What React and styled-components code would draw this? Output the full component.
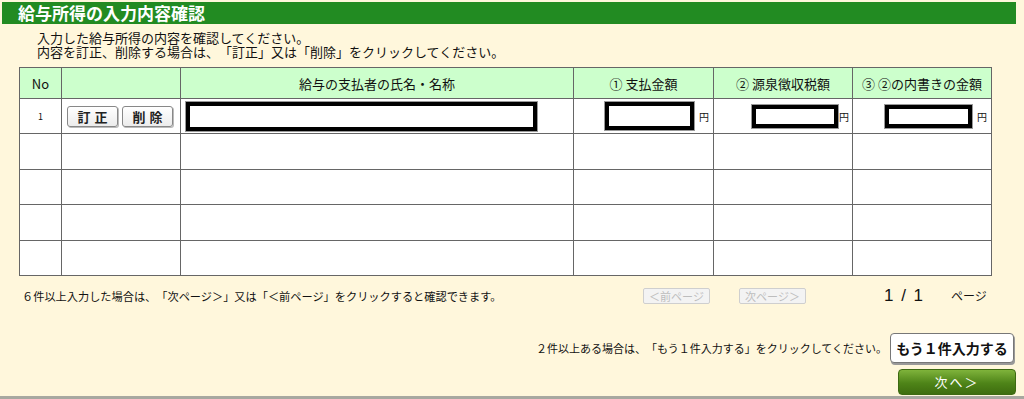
import React from "react";
import styled, { createGlobalStyle } from "styled-components";

const Global = createGlobalStyle`
  html, body { margin: 0; padding: 0; background: #fff7dc; }
  body {
    font-family: "Noto Sans CJK JP", "Noto Sans", sans-serif;
    color: #111;
    text-spacing-trim: space-all;
  }
`;

const Page = styled.div`
  width: 1024px;
  height: 399px;
  box-sizing: border-box;
  background: #fff7dc;
  padding-top: 2px;
  border-bottom: 3px solid #a8a8a0;
  display: flex;
  flex-direction: column;
`;

const TitleBar = styled.h1`
  margin: 0 8px 0 2px;
  height: 22px;
  background: #228b22;
  color: #fff;
  font-size: 17px;
  font-weight: bold;
  line-height: 22px;
  padding-left: 16px;
`;

const Intro = styled.div`
  margin: 7px 0 0 37px;
  font-size: 13px;
  line-height: 14px;
`;

const IntroLine = styled.div`
  height: 14px;
  line-height: 14px;
`;

const Table = styled.table`
  margin: 8px 0 0 19px;
  width: 972px;
  border-collapse: collapse;
  table-layout: fixed;
  background: #fff;
`;

const Th = styled.th`
  background: #ccffcc;
  border: 1px solid #666;
  height: 30px;
  padding: 0;
  font-weight: normal;
  font-size: 13px;
  text-align: center;
`;

const Td = styled.td`
  border: 1px solid #666;
  height: 34.4px;
  padding: 0 ${(p) => p.$pr || 0}px 0 ${(p) => p.$pl || 0}px;
  text-align: ${(p) => p.$align || "left"};
  font-size: ${(p) => p.$fs || 13}px;
  vertical-align: middle;
`;

const EditButton = styled.button`
  width: 51px;
  height: 21px;
  margin-right: 4px;
  padding: 0;
  font-family: inherit;
  font-size: 13px;
  font-weight: bold;
  letter-spacing: 4px;
  text-indent: 4px;
  border: 1px solid #888;
  border-radius: 3px;
  background: linear-gradient(#fff, #ececec);
  box-shadow: 1px 1px 0 #bbb;
  color: #222;
  vertical-align: middle;
`;

const Box = styled.span`
  display: inline-block;
  box-sizing: border-box;
  width: ${(p) => p.$w}px;
  height: ${(p) => p.$h}px;
  border: 4px solid #000;
  outline: 1px solid #999;
  background: #fff;
  vertical-align: middle;
`;

const Yen = styled.span`
  display: inline-block;
  font-size: 10px;
  margin-left: ${(p) => p.$gap}px;
  vertical-align: middle;
`;

const Pager = styled.div`
  display: flex;
  align-items: center;
  margin: 10px 0 0 0;
  height: 20px;
`;

const Note = styled.div`
  font-size: ${(p) => p.$fs}px;
  margin-left: ${(p) => p.$ml || 0}px;
  width: ${(p) => (p.$w ? `${p.$w}px` : "auto")};
  white-space: nowrap;
`;

const PageBtn = styled.button`
  width: 67px;
  height: 16px;
  padding: 0;
  font-family: inherit;
  font-size: 11px;
  line-height: 14px;
  color: #bdbdbd;
  background: #f3f3f3;
  border: 1px solid #cfcfcf;
  border-radius: 2px;
  margin-left: ${(p) => p.$ml}px;
`;

const PageCount = styled.span`
  font-family: "Liberation Sans", Arial, sans-serif;
  font-size: 17px;
  margin-left: 78px;
  word-spacing: 3px;
`;

const PageWord = styled.span`
  font-size: 12px;
  margin-left: 28px;
`;

const AddRow = styled.div`
  display: flex;
  align-items: center;
  justify-content: flex-end;
  margin: 27px 10px 0 0;
`;

const AddBtn = styled.button`
  width: 124px;
  height: 30px;
  margin-left: 3px;
  padding: 0;
  font-family: inherit;
  font-size: 14px;
  font-weight: bold;
  color: #111;
  background: #fff;
  border: 1px solid #777;
  border-radius: 4px;
  box-shadow: 1px 2px 0 #999;
`;

const NextRow = styled.div`
  display: flex;
  justify-content: flex-end;
  margin: 6px 8px 0 0;
`;

const NextBtn = styled.button`
  width: 118px;
  height: 26px;
  padding: 0;
  font-family: inherit;
  font-size: 13px;
  color: #fff;
  letter-spacing: 2px;
  background: linear-gradient(#7fb33b, #4e8418 55%, #3e6d0f);
  border: 1px solid #3d6a12;
  border-radius: 4px;
`;

const rows = [1, 2, 3, 4, 5];

export default function App() {
  return (
    <>
      <Global />
      <Page>
        <TitleBar>給与所得の入力内容確認</TitleBar>
        <Intro>
          <IntroLine>入力した給与所得の内容を確認してください。</IntroLine>
          <IntroLine>内容を訂正、削除する場合は、「訂正」又は「削除」をクリックしてください。</IntroLine>
        </Intro>
        <Table>
          <colgroup>
            <col style={{ width: 42 }} />
            <col style={{ width: 119 }} />
            <col style={{ width: 393 }} />
            <col style={{ width: 140 }} />
            <col style={{ width: 139 }} />
            <col style={{ width: 139 }} />
          </colgroup>
          <thead>
            <tr>
              <Th>No</Th>
              <Th></Th>
              <Th>給与の支払者の氏名・名称</Th>
              <Th>① 支払金額</Th>
              <Th>② 源泉徴収税額</Th>
              <Th>③ ②の内書きの金額</Th>
            </tr>
          </thead>
          <tbody>
            {rows.map((r) =>
              r === 1 ? (
                <tr key={r}>
                  <Td $align="center" $fs={9}>1</Td>
                  <Td $pl={5}>
                    <EditButton>訂正</EditButton>
                    <EditButton>削除</EditButton>
                  </Td>
                  <Td $pl={5}>
                    <Box $w={351} $h={29} />
                  </Td>
                  <Td $align="right" $pr={4}>
                    <Box $w={89} $h={28} />
                    <Yen $gap={5}>円</Yen>
                  </Td>
                  <Td $align="right" $pr={3}>
                    <Box $w={86} $h={23} />
                    <Yen $gap={1}>円</Yen>
                  </Td>
                  <Td $align="right" $pr={4}>
                    <Box $w={87} $h={23} />
                    <Yen $gap={5}>円</Yen>
                  </Td>
                </tr>
              ) : (
                <tr key={r}>
                  <Td />
                  <Td />
                  <Td />
                  <Td />
                  <Td />
                  <Td />
                </tr>
              )
            )}
          </tbody>
        </Table>
        <Pager>
          <Note $ml={22} $w={621} $fs={11.2}>
            ６件以上入力した場合は、「次ページ＞」又は「＜前ページ」をクリックすると確認できます。
          </Note>
          <PageBtn $ml={0} disabled>＜前ページ</PageBtn>
          <PageBtn $ml={29} disabled>次ページ＞</PageBtn>
          <PageCount>1 / 1</PageCount>
          <PageWord>ページ</PageWord>
        </Pager>
        <AddRow>
          <Note $fs={11}>２件以上ある場合は、「もう１件入力する」をクリックしてください。</Note>
          <AddBtn>もう１件入力する</AddBtn>
        </AddRow>
        <NextRow>
          <NextBtn>次へ＞</NextBtn>
        </NextRow>
      </Page>
    </>
  );
}
